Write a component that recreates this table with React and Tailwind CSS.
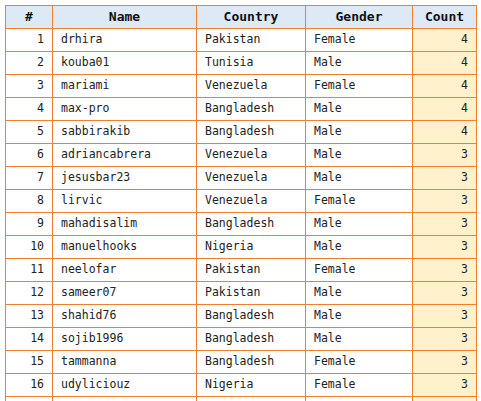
import React from 'react';

const rows = [
  [1, 'drhira', 'Pakistan', 'Female', 4],
  [2, 'kouba01', 'Tunisia', 'Male', 4],
  [3, 'mariami', 'Venezuela', 'Female', 4],
  [4, 'max-pro', 'Bangladesh', 'Male', 4],
  [5, 'sabbirakib', 'Bangladesh', 'Male', 4],
  [6, 'adriancabrera', 'Venezuela', 'Male', 3],
  [7, 'jesusbar23', 'Venezuela', 'Male', 3],
  [8, 'lirvic', 'Venezuela', 'Female', 3],
  [9, 'mahadisalim', 'Bangladesh', 'Male', 3],
  [10, 'manuelhooks', 'Nigeria', 'Male', 3],
  [11, 'neelofar', 'Pakistan', 'Female', 3],
  [12, 'sameer07', 'Pakistan', 'Male', 3],
  [13, 'shahid76', 'Bangladesh', 'Male', 3],
  [14, 'sojib1996', 'Bangladesh', 'Male', 3],
  [15, 'tammanna', 'Bangladesh', 'Female', 3],
  [16, 'udyliciouz', 'Nigeria', 'Female', 3],
  [17, 'amirul', 'Bangladesh', 'Male', 2],
];

export default function App() {
  return (
    <div className="w-[481px] h-[401px] overflow-hidden bg-white p-[5px]" style={{ fontFamily: '"DejaVu Sans Mono", monospace' }}>
      <table className="border-collapse text-[11.5px] text-[#222] table-fixed w-[471px]">
        <colgroup>
          <col className="w-[47px]" />
          <col className="w-[144px]" />
          <col className="w-[109px]" />
          <col className="w-[107px]" />
          <col className="w-[64px]" />
        </colgroup>
        <thead>
          <tr className="h-[23px] bg-[#dde9f5] font-bold text-[13px] text-[#111]">
            <th className="border border-[#f07f2e] px-2 text-center">#</th>
            <th className="border border-[#f07f2e] px-2 text-center">Name</th>
            <th className="border border-[#f07f2e] px-2 text-center">Country</th>
            <th className="border border-[#f07f2e] px-2 text-center">Gender</th>
            <th className="border border-[#f07f2e] px-2 text-center">Count</th>
          </tr>
        </thead>
        <tbody>
          {rows.map(([n, name, country, gender, count]) => (
            <tr key={n} className="h-[23px]">
              <td className="border border-[#f07f2e] px-2 text-right">{n}</td>
              <td className="border border-[#f07f2e] px-2">{name}</td>
              <td className="border border-[#f07f2e] px-2">{country}</td>
              <td className="border border-[#f07f2e] px-2">{gender}</td>
              <td className="border border-[#f07f2e] px-2 text-right bg-[#fff1cc]">{count}</td>
            </tr>
          ))}
        </tbody>
      </table>
    </div>
  );
}
